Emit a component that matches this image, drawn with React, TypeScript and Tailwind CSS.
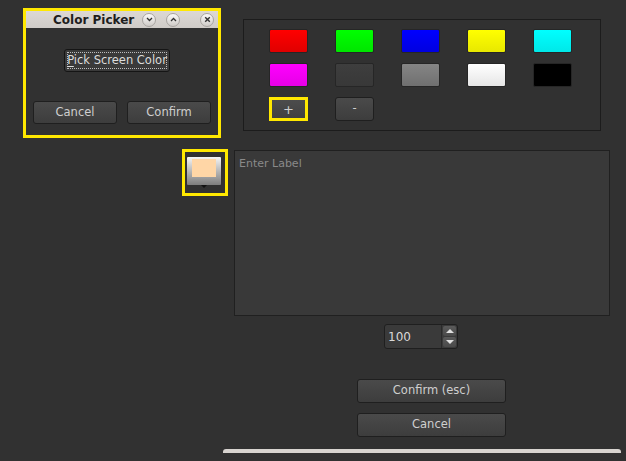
import React from 'react';

const swatches = [
  'bg-gradient-to-b from-[#ff0000] to-[#e00000]',
  'bg-gradient-to-b from-[#00ff00] to-[#00e600]',
  'bg-gradient-to-b from-[#0000ff] to-[#0000e0]',
  'bg-gradient-to-b from-[#ffff00] to-[#e8e800]',
  'bg-gradient-to-b from-[#00ffff] to-[#00e8e8]',
  'bg-gradient-to-b from-[#ff00ff] to-[#e600e6]',
  'bg-gradient-to-b from-[#3e3e3e] to-[#383838]',
  'bg-gradient-to-b from-[#858585] to-[#707070]',
  'bg-gradient-to-b from-[#ffffff] to-[#e6e6e6]',
  'bg-[#000000]',
];

function Btn({ label, className }: { label: string; className: string }) {
  return (
    <div
      className={`flex items-center justify-center rounded-[3px] border border-[#1f1f1f] bg-gradient-to-b from-[#4a4a4a] to-[#3d3d3d] text-[11.5px] text-[#cfcfcf] ${className}`}
    >
      {label}
    </div>
  );
}

function TitleCircle({ children }: { children: React.ReactNode }) {
  return (
    <div className="flex h-[14px] w-[14px] items-center justify-center rounded-full border border-[#a8a4a0] bg-gradient-to-b from-[#fbfaf9] to-[#cfcbc7]">
      {children}
    </div>
  );
}

export default function App() {
  return (
    <div
      className="relative h-[461px] w-[626px] overflow-hidden bg-[#313131]"
      style={{ fontFamily: '"DejaVu Sans", "Liberation Sans", sans-serif' }}
    >
      {/* main dialog */}
      <div className="flex flex-col">
        {/* swatch panel */}
        <div className="ml-[243px] mt-[19px] h-[112px] w-[358px] border border-[#1c1c1c] pl-[25px] pt-[9px]">
          <div className="grid grid-cols-[repeat(5,39px)] gap-x-[27px] gap-y-[10px]">
            {swatches.map((c, i) => (
              <div key={i} className={`h-[24px] w-[39px] rounded-[2px] border border-[#262626] ${c}`} />
            ))}
            <div className="h-[24px] w-[39px] border-[3px] border-[#ffe800] p-0">
              <div className="flex h-full w-full items-center justify-center bg-gradient-to-b from-[#4c4c4c] to-[#414141] text-[13px] leading-none text-[#cfcfcf]">
                +
              </div>
            </div>
            <Btn label="-" className="h-[24px] w-[39px]" />
          </div>
        </div>

        {/* colour button + label text */}
        <div className="mt-[19px] flex items-start">
          <div className="ml-[182px] mt-[-1px] h-[47px] w-[46px] border-[3px] border-[#ffe800] pl-[2px] pt-[5px]">
            <div className="relative flex h-[28px] w-[34px] justify-center rounded-[1px] bg-gradient-to-b from-[#f6f6f6] to-[#7e7e7e] pt-[2px]">
              <div className="h-[18px] w-[24px] bg-[#ffd6a6]" />
              <div className="absolute bottom-[-3px] left-[14px] h-0 w-0 border-x-[3px] border-t-[3px] border-x-transparent border-t-[#111]" />
            </div>
          </div>
          <div className="ml-[6px] h-[166px] w-[376px] border border-[#202020] bg-[#393939] px-[4px] pt-[5px] text-[11px] text-[#8a8a8a]">
            Enter Label
          </div>
        </div>

        {/* spin box */}
        <div className="ml-[384px] mt-[8px] flex h-[25px] w-[74px] rounded-[3px] border border-[#1f1f1f] bg-[#3a3a3a]">
          <div className="flex flex-1 items-center pl-[3px] text-[12px] text-[#d8d8d8]">100</div>
          <div className="flex w-[16px] flex-col gap-[1px] border-l border-[#2a2a2a] p-[1px]">
            <div className="flex flex-1 items-center justify-center rounded-[2px] bg-gradient-to-b from-[#5a5a5a] to-[#4a4a4a]">
              <div className="h-0 w-0 border-x-[4px] border-b-[4px] border-x-transparent border-b-[#e0e0e0]" />
            </div>
            <div className="flex flex-1 items-center justify-center rounded-[2px] bg-gradient-to-b from-[#5a5a5a] to-[#4a4a4a]">
              <div className="h-0 w-0 border-x-[4px] border-t-[4px] border-x-transparent border-t-[#e0e0e0]" />
            </div>
          </div>
        </div>

        <Btn label="Confirm (esc)" className="ml-[357px] mt-[30px] h-[24px] w-[149px]" />
        <Btn label="Cancel" className="ml-[357px] mt-[10px] h-[24px] w-[149px]" />

        <div className="ml-[223px] mt-[12px] h-[4px] w-[398px] rounded-t-[3px] bg-[#d8d4d0]" />
      </div>

      {/* floating colour picker window */}
      <div className="absolute left-[23px] top-[8px] flex h-[130px] w-[198px] flex-col border-[3px] border-[#ffe800] bg-[#313131]">
        <div className="relative flex h-[17px] items-center bg-gradient-to-b from-[#dcd8d4] to-[#d0ccc8]">
          <div className="ml-[27px] whitespace-nowrap text-[12px] font-bold leading-none text-[#1e1e1e]">Color Picker</div>
          <div className="ml-[8px] flex items-center gap-[10px]">
            <TitleCircle>
              <svg width="7" height="5" viewBox="0 0 7 5"><path d="M1 1l2.5 2.5L6 1" fill="none" stroke="#333" strokeWidth="1.3" /></svg>
            </TitleCircle>
            <TitleCircle>
              <svg width="7" height="5" viewBox="0 0 7 5"><path d="M1 4l2.5-2.5L6 4" fill="none" stroke="#333" strokeWidth="1.3" /></svg>
            </TitleCircle>
          </div>
          <div className="ml-auto mr-[4px]">
            <TitleCircle>
              <svg width="7" height="7" viewBox="0 0 7 7"><path d="M1.2 1.2l4.6 4.6M5.8 1.2L1.2 5.8" fill="none" stroke="#333" strokeWidth="1.4" /></svg>
            </TitleCircle>
          </div>
        </div>
        <div className="ml-[38px] mt-[21px] flex h-[23px] w-[106px] items-center justify-center rounded-[3px] border border-[#151515] bg-[#3a3a3a] p-[2px]">
          <div className="flex h-full w-full items-center justify-center whitespace-nowrap border border-dotted border-[#bdbdbd] text-[11.5px] text-[#dcdcdc]">
            <span>
              <span className="underline underline-offset-2">P</span>ick Screen Color
            </span>
          </div>
        </div>
        <div className="ml-[7px] mt-[29px] flex gap-[10px]">
          <Btn label="Cancel" className="h-[23px] w-[84px]" />
          <Btn label="Confirm" className="h-[23px] w-[84px]" />
        </div>
      </div>
    </div>
  );
}
